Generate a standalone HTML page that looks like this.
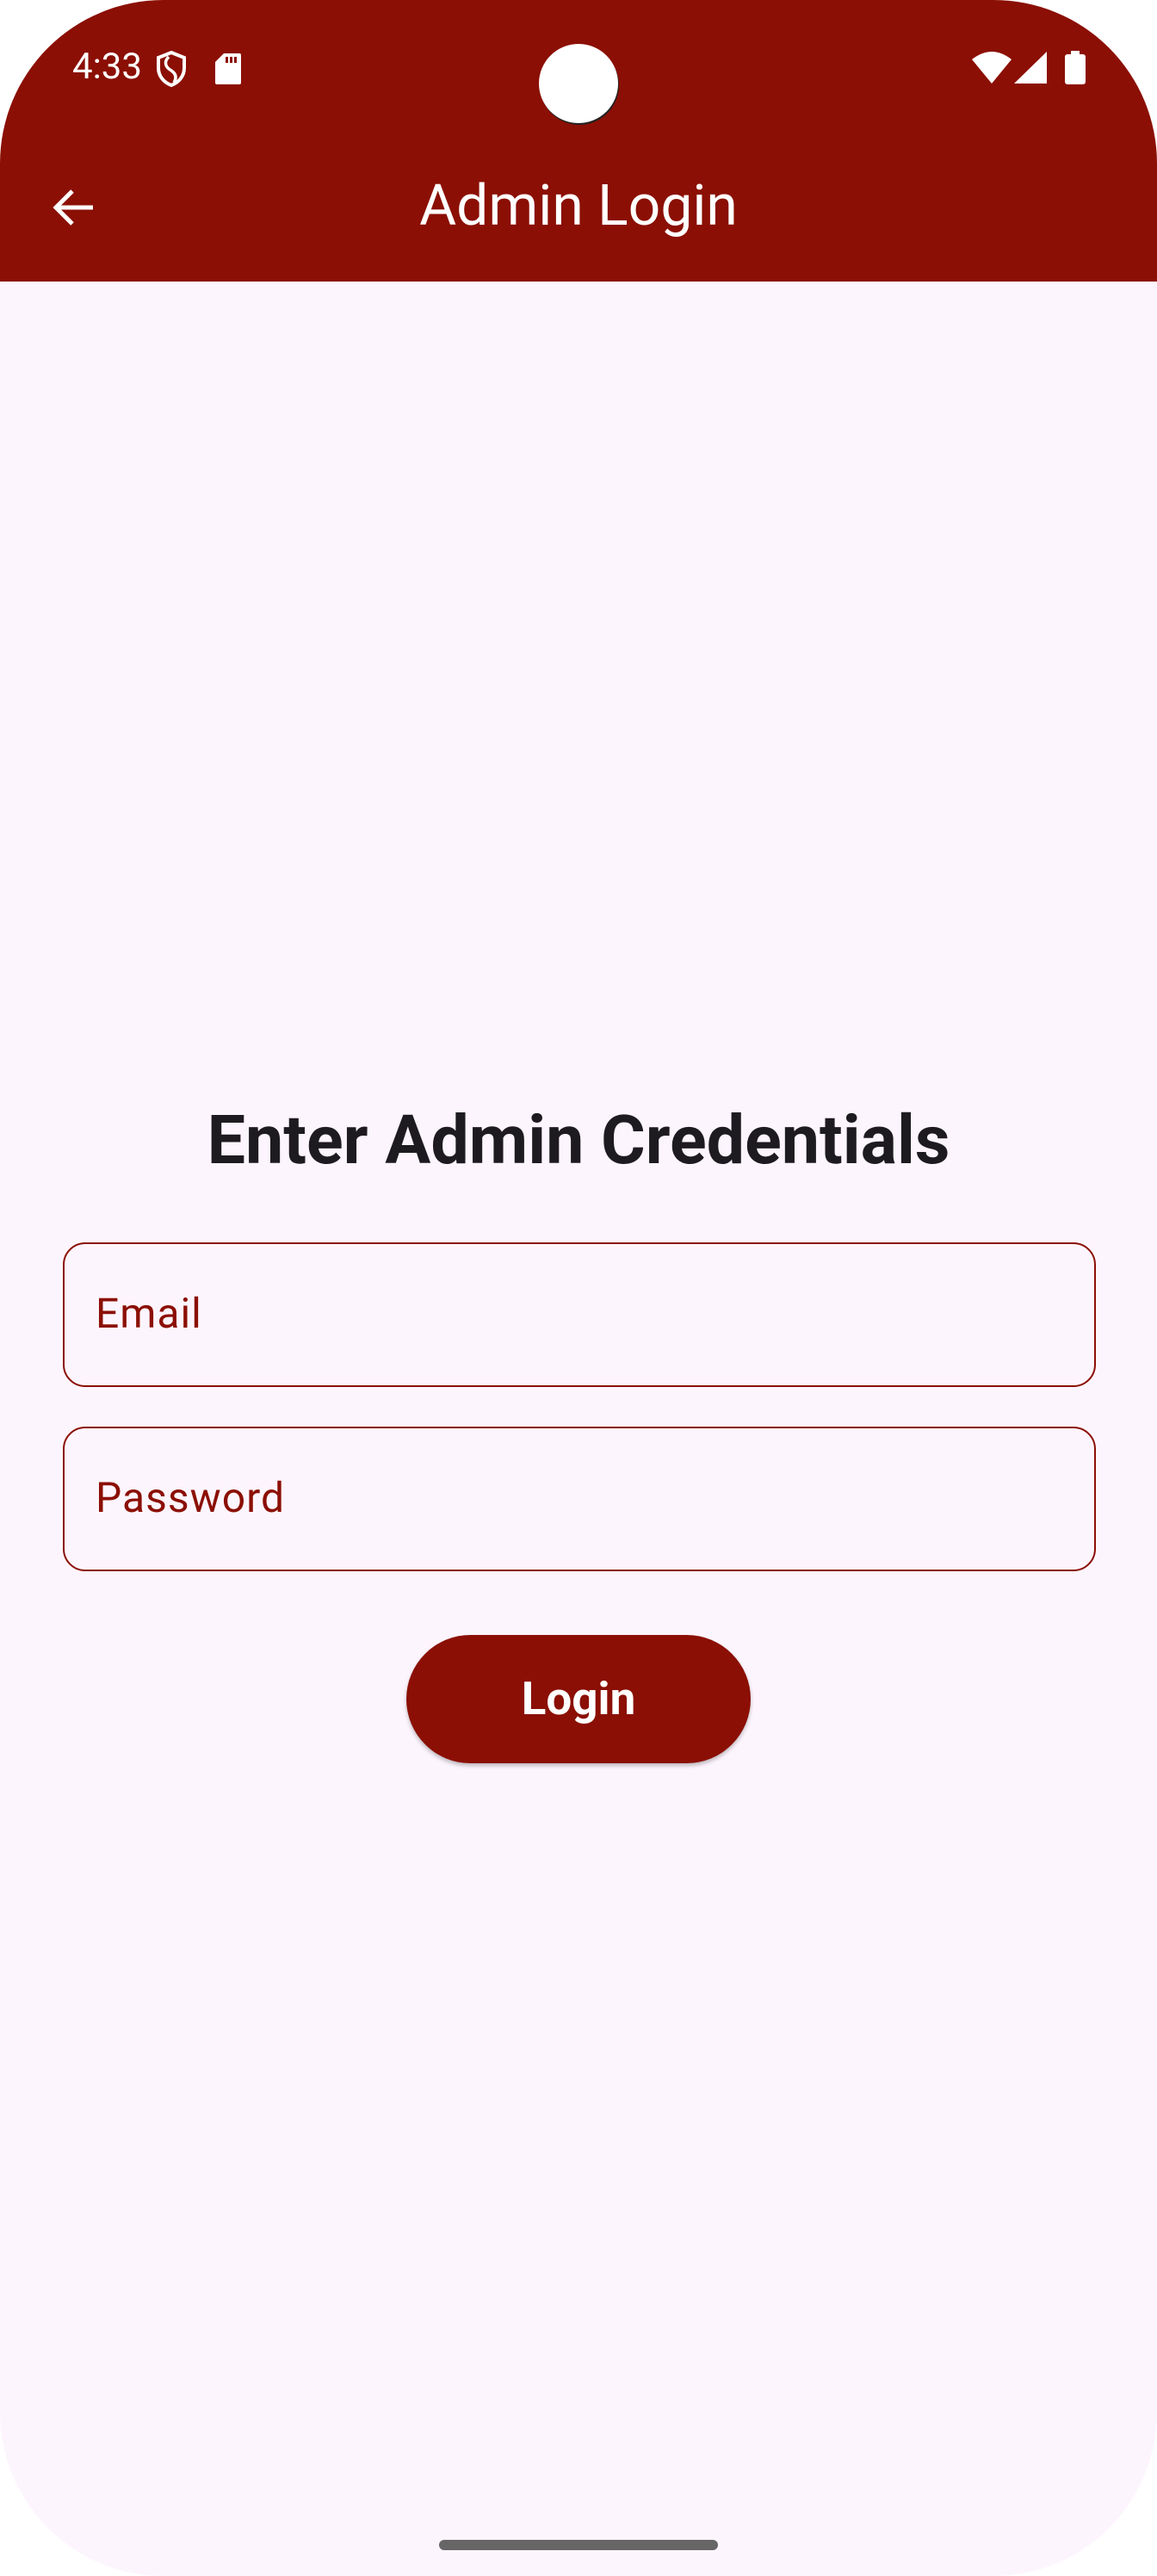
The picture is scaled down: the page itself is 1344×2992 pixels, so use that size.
<!DOCTYPE html>
<html><head><meta charset="utf-8"><style>
html,body{margin:0;padding:0;background:#fff;}
body{width:1344px;height:2992px;position:relative;overflow:hidden;font-family:"Roboto","Liberation Sans",sans-serif;}
.screen{position:absolute;left:0;top:0;width:1344px;height:2992px;background:#fdf5fd;border-radius:190px;overflow:hidden;}
.bar{position:absolute;left:0;top:0;width:1344px;height:327px;background:#8b0f04;}
.cam{position:absolute;left:626px;top:51px;width:92px;height:92px;border-radius:50%;background:#fff;box-shadow:1px 2px 0 #222;}
.time{position:absolute;left:84px;top:55px;color:#fff;font-size:42px;line-height:46px;}
.title{position:absolute;left:0;width:1344px;top:200px;text-align:center;color:#fff;font-size:66px;line-height:80px;}
.h{position:absolute;left:0;width:1344px;top:1280px;text-align:center;color:#1e1b20;font-size:79px;font-weight:bold;line-height:90px;}
.f{position:absolute;left:73px;width:1200px;height:168px;border:2px solid #8b0f04;border-radius:26px;box-sizing:border-box;}
.f span{position:absolute;left:36px;top:52px;color:#8b0f04;font-size:48px;letter-spacing:1px;line-height:58px;}
.btn{position:absolute;left:472px;top:1899px;width:400px;height:149px;border-radius:75px;background:#8b0f04;color:#fff;font-size:53px;font-weight:bold;text-align:center;line-height:149px;box-shadow:0 3px 5px rgba(0,0,0,.25);}
.home{position:absolute;left:510px;top:2950px;width:324px;height:12px;border-radius:6px;background:#666;}
</style></head><body>
<div class="screen">
<div class="bar"></div>
<div class="cam"></div>
<div class="time">4:33</div>
<svg style="position:absolute;left:180px;top:58px" width="38" height="44" viewBox="0 0 38 44"><path d="M19 3 L34 9 V21 C34 31 27 38 19 41 C11 38 4 31 4 21 V9 Z" fill="none" stroke="#fff" stroke-width="4"/><path d="M16 8 C10 14 12 20 19 24 C25 28 25 33 22 38" fill="none" stroke="#fff" stroke-width="3.5"/></svg>
<svg style="position:absolute;left:250px;top:62px" width="30" height="36" viewBox="0 0 30 36"><path d="M10 0 H28 Q30 0 30 2 V34 Q30 36 28 36 H2 Q0 36 0 34 V10 Z" fill="#fff"/><rect x="12" y="4" width="3" height="7" fill="#8b0f04"/><rect x="17" y="4" width="3" height="7" fill="#8b0f04"/><rect x="22" y="4" width="3" height="7" fill="#8b0f04"/></svg>
<svg style="position:absolute;left:1129px;top:59px" width="46" height="39" viewBox="0 0 46 39"><path d="M0 10 Q23 -8 46 10 L23 38 Z" fill="#fff"/></svg>
<svg style="position:absolute;left:1178px;top:60px" width="38" height="37" viewBox="0 0 38 37"><path d="M38 0 V37 H0 Z" fill="#fff"/></svg>
<svg style="position:absolute;left:1237px;top:59px" width="24" height="39" viewBox="0 0 24 39"><rect x="7" y="0" width="10" height="5" fill="#fff"/><rect x="0" y="4" width="24" height="35" rx="3" fill="#fff"/></svg>
<svg style="position:absolute;left:60px;top:218px" width="50" height="46" viewBox="0 0 50 46"><path d="M48 23 H6 M24 4 L5 23 L24 42" fill="none" stroke="#fff" stroke-width="5"/></svg>
<div class="title">Admin Login</div>
<div class="h">Enter Admin Credentials</div>
<div class="f" style="top:1443px"><span>Email</span></div>
<div class="f" style="top:1657px"><span>Password</span></div>
<div class="btn">Login</div>
<div class="home"></div>
</div>
</body></html>
